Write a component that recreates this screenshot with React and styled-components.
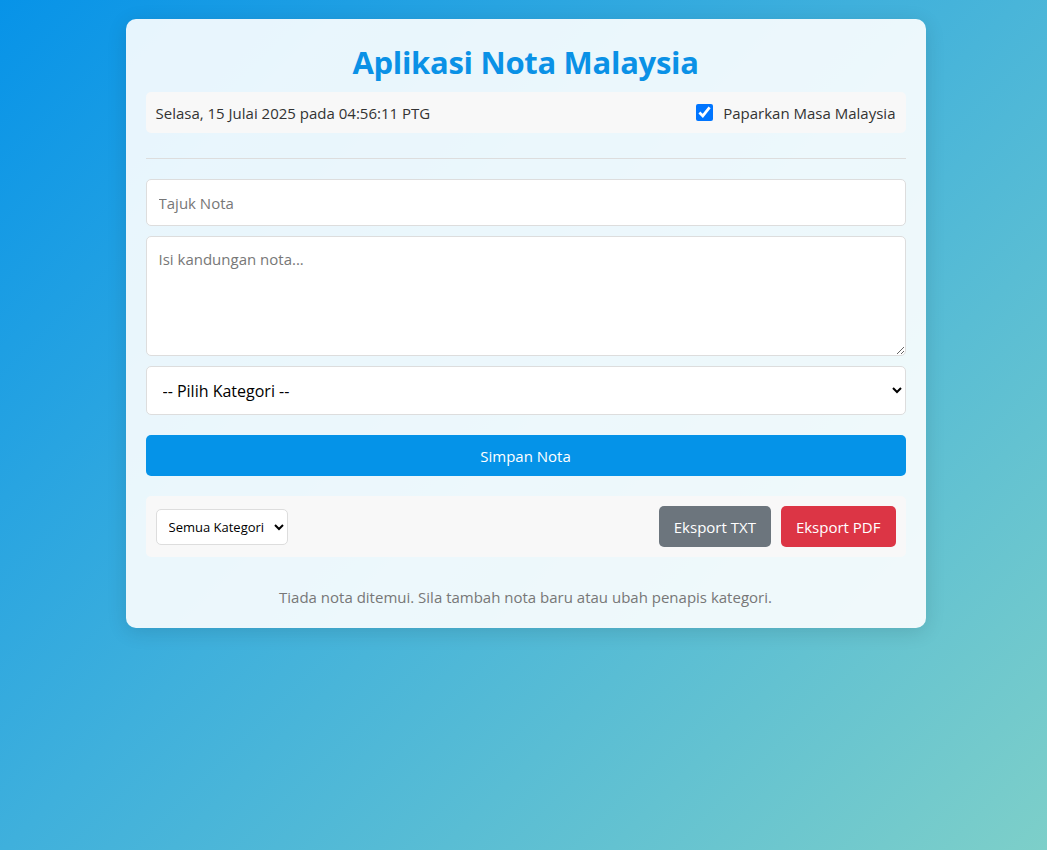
import styled, { createGlobalStyle } from 'styled-components'

const GlobalStyle = createGlobalStyle`
    html, body {
        margin: 0;
        padding: 0;
        min-height: 100%;
    }
    body {
        min-height: 850px;
        background: linear-gradient(135deg, #0793e8 0%, #3fb0dc 45%, #7dcfc9 100%);
        font-family: "Segoe UI", "Open Sans", "Noto Sans", sans-serif;
        color: #333;
    }
`

const Page = styled.div`
    padding: 19px 0 40px 4px;
    display: flex;
    justify-content: center;
`

const Card = styled.div`
    width: 800px;
    box-sizing: border-box;
    padding: 20px;
    border-radius: 10px;
    background: rgba(255, 255, 255, 0.9);
    box-shadow: 0 4px 20px rgba(0, 0, 0, 0.12);
`

const Title = styled.h1`
    margin: 4px 0 11px;
    text-align: center;
    color: #0a91e6;
    font-size: 31px;
    letter-spacing: -0.3px;
    line-height: 38px;
    font-weight: 700;
`

const Bar = styled.div`
    display: flex;
    align-items: center;
    justify-content: space-between;
    gap: 10px;
    padding: 10px;
    height: ${p => p.$height || 41}px;
    box-sizing: border-box;
    background: #f8f8f8;
    border-radius: 5px;
`

const DateText = styled.span`
    font-size: 15px;
    color: #333;
`

const CheckLabel = styled.label`
    display: flex;
    align-items: center;
    gap: 10px;
    font-size: 15px;
    color: #333;
`

const Check = styled.input`
    width: 17px;
    height: 17px;
    margin: 0;
    accent-color: #0075ff;
`

const Divider = styled.hr`
    border: none;
    border-top: 1px solid #ddd;
    margin: 25px 0 20px;
`

const Form = styled.div`
    display: flex;
    flex-direction: column;
    gap: 10px;
`

const Field = styled.input`
    height: 47px;
    box-sizing: border-box;
    padding: 12px;
    border: 1px solid #ddd;
    border-radius: 5px;
    font-family: inherit;
    font-size: 15px;
    background: #fff;
    &::placeholder { color: #777; }
`

const Area = styled.textarea`
    height: 120px;
    box-sizing: border-box;
    padding: 12px;
    border: 1px solid #ddd;
    border-radius: 5px;
    font-family: inherit;
    font-size: 15px;
    resize: vertical;
    &::placeholder { color: #777; }
`

const Select = styled.select`
    height: ${p => (p.$small ? 36 : 49)}px;
    box-sizing: border-box;
    padding: ${p => (p.$small ? '0 6px 0 8px' : '0 12px')};
    border: 1px solid #ddd;
    border-radius: 5px;
    background: #fff;
    color: #000;
    font-family: inherit;
    font-size: ${p => (p.$small ? 13 : 16)}px;
`

const Button = styled.button`
    height: 41px;
    padding: 0 15px;
    border: none;
    border-radius: 5px;
    background: ${p => p.$bg || '#0593e8'};
    color: #fff;
    font-family: inherit;
    font-size: 15px;
    cursor: pointer;
`

const SaveButton = styled(Button)`
    margin-top: 10px;
    width: 100%;
`

const Toolbar = styled(Bar)`
    margin-top: 20px;
`

const Actions = styled.div`
    display: flex;
    gap: 10px;
`

const Empty = styled.p`
    margin: 30px 0 0;
    text-align: center;
    color: #777;
    font-size: 15px;
    line-height: 21px;
`

export default function App() {
    return (
        <>
            <GlobalStyle />
            <Page>
                <Card>
                    <Title>Aplikasi Nota Malaysia</Title>
                    <Bar>
                        <DateText>Selasa, 15 Julai 2025 pada 04:56:11 PTG</DateText>
                        <CheckLabel>
                            <Check type="checkbox" defaultChecked />
                            Paparkan Masa Malaysia
                        </CheckLabel>
                    </Bar>
                    <Divider />
                    <Form>
                        <Field placeholder="Tajuk Nota" />
                        <Area placeholder="Isi kandungan nota..." />
                        <Select defaultValue="">
                            <option value="">-- Pilih Kategori --</option>
                            <option value="kerja">Kerja</option>
                            <option value="peribadi">Peribadi</option>
                        </Select>
                        <SaveButton>Simpan Nota</SaveButton>
                    </Form>
                    <Toolbar $height={61}>
                        <Select $small defaultValue="semua">
                            <option value="semua">Semua Kategori</option>
                        </Select>
                        <Actions>
                            <Button $bg="#6c757d">Eksport TXT</Button>
                            <Button $bg="#dc3545">Eksport PDF</Button>
                        </Actions>
                    </Toolbar>
                    <Empty>Tiada nota ditemui. Sila tambah nota baru atau ubah penapis kategori.</Empty>
                </Card>
            </Page>
        </>
    )
}
